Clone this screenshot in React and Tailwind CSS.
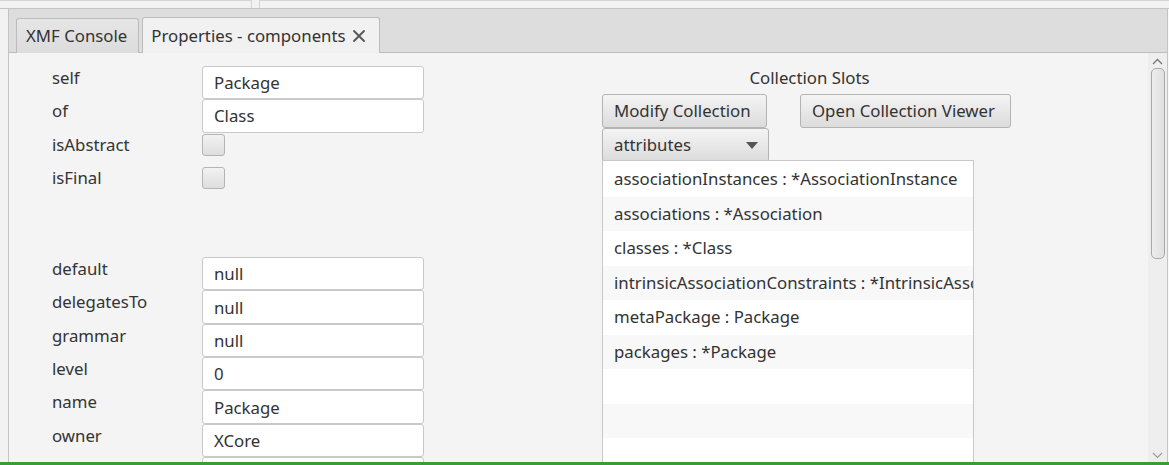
import React from "react";

const topFields = [
  { label: "self", type: "text", value: "Package" },
  { label: "of", type: "text", value: "Class" },
  { label: "isAbstract", type: "check" },
  { label: "isFinal", type: "check" },
];

const bottomFields = [
  { label: "default", value: "null" },
  { label: "delegatesTo", value: "null" },
  { label: "grammar", value: "null" },
  { label: "level", value: "0" },
  { label: "name", value: "Package" },
  { label: "owner", value: "XCore" },
  { label: "parents", value: "" },
];

const slots = [
  "associationInstances : *AssociationInstance",
  "associations : *Association",
  "classes : *Class",
  "intrinsicAssociationConstraints : *IntrinsicAssociationConstraint",
  "metaPackage : Package",
  "packages : *Package",
  "",
  "",
  "",
];

function Row({ label, children }) {
  return (
    <div className="flex h-[33.3px] shrink-0">
      <div className="w-[150px] shrink-0 pt-[1px] leading-[22px]">{label}</div>
      <div className="w-[222px] h-full">{children}</div>
    </div>
  );
}

function TextField({ value }) {
  return (
    <div className="h-full w-full bg-white border border-[#c9c9c9] rounded-[3px] flex items-center px-[11px] pt-[1px] leading-[22px]">
      {value}
    </div>
  );
}

function Check() {
  return (
    <div className="mt-[1px] w-[23px] h-[22px] rounded-[3px] border border-[#b4b4b4] bg-gradient-to-b from-[#f2f2f2] to-[#dedede]" />
  );
}

function Btn({ children, className = "" }) {
  return (
    <div
      className={
        "h-[34px] shrink-0 rounded-[3px] border border-[#b3b3b3] bg-gradient-to-b from-[#f4f4f4] to-[#dcdcdc] flex items-center px-[11px] leading-[22px] " +
        className
      }
    >
      {children}
    </div>
  );
}

export default function App() {
  return (
    <div className="w-[1169px] h-[465px] overflow-hidden flex flex-col bg-[#f3f3f3] text-[16.8px] text-[#333333] font-['Noto_Sans',sans-serif]">
      {/* top strip */}
      <div className="h-[9px] shrink-0 flex border-b border-[#c4c4c4] bg-[#f2f2f2]">
        <div className="w-[252px] border-t border-r border-[#d4d4d4]" />
        <div className="w-[8px] border-r border-[#d4d4d4]" />
        <div className="flex-1 border-t border-[#d4d4d4]" />
      </div>

      <div className="flex-1 flex min-h-0">
        <div className="w-[9px] shrink-0 bg-[#f2f2f2] border-r border-[#c4c4c4]" />
        <div className="flex-1 flex flex-col min-w-0 border-r border-[#c4c4c4]">
          {/* tab header */}
          <div className="h-[44px] shrink-0 bg-[#dddddd] border-b border-[#bdbdbd] flex items-end pl-[7px] gap-[3px]">
            <div className="h-[35px] -mb-[1px] pl-[9px] pr-[11px] flex items-center rounded-t-[3px] border border-b-0 border-[#bcbcbc] bg-gradient-to-b from-[#e6e6e6] to-[#dcdcdc] leading-[22px]">
              XMF Console
            </div>
            <div className="h-[36px] -mb-[1px] pl-[8px] pr-[13px] flex items-center rounded-t-[3px] border border-b-0 border-[#bcbcbc] bg-[#f1f1f1] leading-[22px]">
              <span>Properties - components</span>
              <svg className="ml-[6px]" width="14" height="14" viewBox="0 0 14 14">
                <path d="M2 2 L12 12 M12 2 L2 12" stroke="#555" strokeWidth="1.8" strokeLinecap="round" />
              </svg>
            </div>
          </div>

          {/* content */}
          <div className="flex-1 flex min-h-0 bg-[#f4f4f4]">
            <div className="flex-1 flex min-w-0 overflow-hidden">
              {/* left form */}
              <div className="pl-[43px] pt-[13px] flex flex-col shrink-0">
                {topFields.map((f) => (
                  <Row key={f.label} label={f.label}>
                    {f.type === "text" ? <TextField value={f.value} /> : <Check />}
                  </Row>
                ))}
                <div className="h-[58px] shrink-0" />
                {bottomFields.map((f) => (
                  <Row key={f.label} label={f.label}>
                    <TextField value={f.value} />
                  </Row>
                ))}
              </div>

              {/* right collection slots */}
              <div className="ml-[178px] pt-[14px] flex flex-col shrink-0">
                <div className="w-[409px] pl-[6px] text-center leading-[22px] shrink-0">Collection Slots</div>
                <div className="mt-[5px] flex gap-[33px] shrink-0">
                  <Btn className="w-[165px]">Modify Collection</Btn>
                  <Btn className="w-[211px]">Open Collection Viewer</Btn>
                </div>
                <Btn className="w-[167px] justify-between pr-[10px]">
                  <span>attributes</span>
                  <svg width="12" height="7" viewBox="0 0 12 7">
                    <path d="M0 0 L12 0 L6 7 Z" fill="#555" />
                  </svg>
                </Btn>
                <div className="-mt-[2px] w-[372px] shrink-0 border border-[#c8c8c8] bg-white pt-[1px]">
                  {slots.map((s, i) => (
                    <div
                      key={i}
                      className={
                        "h-[34.5px] flex items-center px-[11px] whitespace-nowrap overflow-hidden leading-[22px] " +
                        (i % 2 === 1 ? "bg-[#f8f8f8]" : "bg-white")
                      }
                    >
                      {s}
                    </div>
                  ))}
                </div>
              </div>
            </div>

            {/* scrollbar */}
            <div className="w-[19px] shrink-0 bg-[#eeeeee] flex flex-col items-center pt-[5px] pb-[3px]">
              <svg width="11" height="7" viewBox="0 0 11 7">
                <path d="M1 6 L5.5 1.5 L10 6" stroke="#777" strokeWidth="1.3" fill="none" />
              </svg>
              <div className="mt-[3px] w-[14px] h-[191px] rounded-[5px] border border-[#a9a9a9] bg-gradient-to-r from-[#ececec] to-[#e0e0e0]" />
              <div className="flex-1" />
              <svg width="11" height="7" viewBox="0 0 11 7">
                <path d="M1 1 L5.5 5.5 L10 1" stroke="#999" strokeWidth="1.1" fill="none" />
              </svg>
            </div>
          </div>
        </div>
        <div className="w-[1px] shrink-0 bg-[#fafafa]" />
      </div>

      <div className="h-[3px] shrink-0 bg-[#3a9b3a]" />
    </div>
  );
}
